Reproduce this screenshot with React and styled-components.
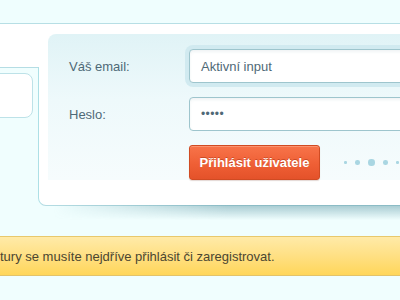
import React from "react";
import styled, { createGlobalStyle } from "styled-components";

const Global = createGlobalStyle`
  html, body { margin: 0; padding: 0; overflow: hidden; background: #f0fefe; }
  body { font-family: "Liberation Sans", Arial, sans-serif; }
`;

const Page = styled.div`
  width: 400px;
  height: 300px;
  overflow: hidden;
  background: #f0fefe;
`;

const Header = styled.div`
  height: 23px;
  background: #effefe;
  border-bottom: 1px solid #b7dfe5;
`;

const TopStrip = styled.div`
  height: 43px;
  background: #fff;
`;

const Row = styled.div`
  display: flex;
  height: 139px;
`;

const LeftCol = styled.div`
  width: 38px;
  flex: none;
  border-top: 1px solid #b5dde4;
  box-sizing: border-box;
  padding-top: 5px;
`;

const SearchBox = styled.div`
  margin-left: -20px;
  width: 53px;
  height: 45px;
  box-sizing: border-box;
  background: #fff;
  border: 1px solid #bde2e8;
  border-radius: 8px;
`;

const Card = styled.div`
  position: relative;
  flex: 1;
  box-sizing: border-box;
  background: #fff;
  border-left: 1px solid #ade0e6;
  border-bottom: 1px solid #b3dbe2;
  border-bottom-left-radius: 8px;
  padding-left: 9px;

  &::after {
    content: "";
    position: absolute;
    top: 100%;
    left: 14px;
    right: -40px;
    height: 15px;
    background: linear-gradient(to bottom, rgba(105, 160, 172, 0.55), rgba(105, 160, 172, 0));
    -webkit-mask-image: linear-gradient(to right, transparent 0%, #000 45%);
    mask-image: linear-gradient(to right, transparent 0%, #000 45%);
  }
`;

const LoginPanel = styled.div`
  margin-top: -33px;
  margin-right: -40px;
  padding: 15px 0 0 21px;
  border-top-left-radius: 8px;
  background: linear-gradient(to bottom, #e0f3f6 0%, #eef9fb 45%, #f6fcfd 100%);
  position: relative;
  z-index: 1;
`;

const Form = styled.div`
  display: grid;
  grid-template-columns: 120px 1fr;
  row-gap: 14px;
  align-items: center;
`;

const Label = styled.div`
  font-size: 13px;
  color: #4e6977;
`;

const Field = styled.div`
  height: 34px;
  box-sizing: border-box;
  border: 1px solid #9ec5cd;
  border-radius: 4px;
  background: #fff;
  box-shadow: inset 0 2px 3px rgba(60, 110, 125, 0.08)
    ${(p) => (p.$focused ? ", 0 0 0 4px #d1eaf0" : "")};
  padding-left: 11px;
  display: flex;
  align-items: center;
  font-size: ${(p) => (p.$secret ? "12px" : "13px")};
  letter-spacing: ${(p) => (p.$secret ? "0.4px" : "0")};
  color: #4f6977;
`;

const Actions = styled.div`
  display: flex;
  align-items: center;
`;

const Button = styled.button`
  width: 131px;
  height: 35px;
  box-sizing: border-box;
  border: 1px solid #d04b23;
  border-radius: 3px;
  background: linear-gradient(to bottom, #f8744a 0%, #ef5f35 55%, #e4522a 100%);
  color: #fff;
  font-family: "Liberation Sans", Arial, sans-serif;
  font-weight: bold;
  font-size: 13px;
  text-shadow: 0 -1px 0 rgba(150, 40, 10, 0.45);
  box-shadow: 0 1px 1px rgba(120, 60, 40, 0.2), inset 0 1px 0 rgba(255, 180, 150, 0.5);
  padding: 0;
  cursor: pointer;
`;

const Dots = styled.div`
  display: flex;
  align-items: center;
  gap: 8.5px;
  margin-left: 24px;
`;

const Dot = styled.span`
  width: ${(p) => p.$size}px;
  height: ${(p) => p.$size}px;
  border-radius: 50%;
  background: #a9d6e2;
`;

const Notice = styled.div`
  margin-top: 30px;
  height: 40px;
  box-sizing: border-box;
  border-top: 1px solid #e8c86c;
  border-bottom: 1px solid #e2c36a;
  background: linear-gradient(to bottom, #ffeaa8 0%, #ffe083 50%, #ffd65a 100%);
  display: flex;
  align-items: center;
  font-size: 13px;
  color: #4b4631;
  white-space: nowrap;
`;

export default function App() {
  return (
    <Page>
      <Global />
      <Header />
      <TopStrip />
      <Row>
        <LeftCol>
          <SearchBox />
        </LeftCol>
        <Card>
          <LoginPanel>
            <Form>
              <Label>Váš email:</Label>
              <Field $focused>Aktivní input</Field>
              <Label>Heslo:</Label>
              <Field $secret>•••••</Field>
              <span />
              <Actions>
                <Button type="button">Přihlásit uživatele</Button>
                <Dots>
                  <Dot $size={2.5} />
                  <Dot $size={4.5} />
                  <Dot $size={6.5} />
                  <Dot $size={4.5} />
                  <Dot $size={2.5} />
                </Dots>
              </Actions>
            </Form>
          </LoginPanel>
        </Card>
      </Row>
      <Notice>tury se musíte nejdříve přihlásit či zaregistrovat.</Notice>
    </Page>
  );
}
